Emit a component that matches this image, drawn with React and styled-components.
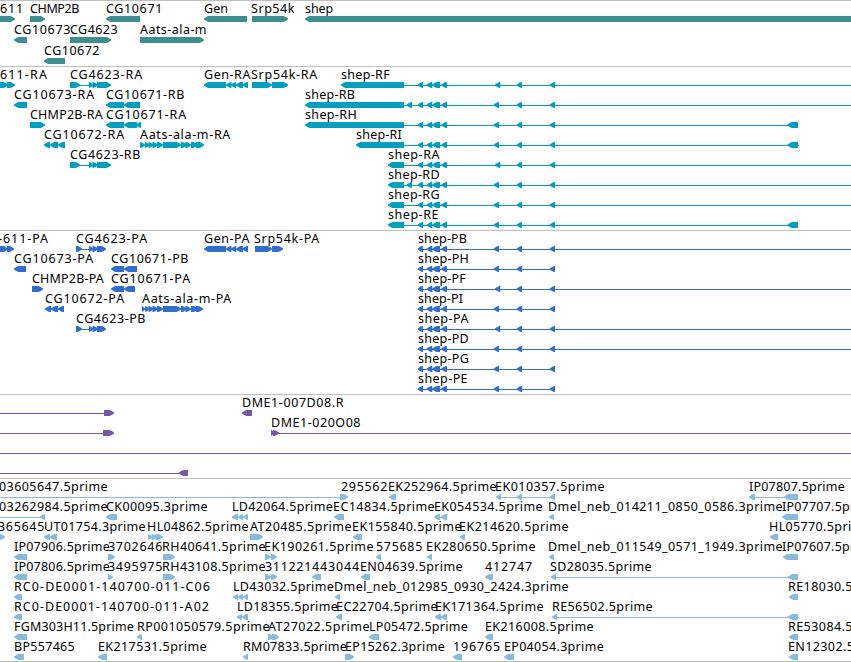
import React from "react";
import styled, { createGlobalStyle } from "styled-components";

const FONT = '12.5px "Noto Sans", "DejaVu Sans", sans-serif';
const VIEW = 851;

const ctx = document.createElement("canvas").getContext("2d");
ctx.font = FONT;

// spreads the letters of a label over the width it should take
const spacing = (text, width) =>
  (width - ctx.measureText(text).width) / text.length;

// name, label x, label end, strand, exons, intron line
const f = (name, x, end, dir, exons, line) => ({ name, x, end, dir, exons, line });

const codingExons = [[89, 93.5], [92.5, 98]];
const genExons = [[204, 226], [226, 231.5], [231, 236], [236, 243], [242.5, 248]];
const aatsExons = (a, b) => [
  [a, 145], [145, 149.5], [148.5, 153.5], [152.5, 158], [157, 163], [163, 181],
  [181, 187], [185.5, 191], [191, 198], [196, b],
];

const shepTail = (mid) => [
  [417.7, 423], [426.7, 432.3], [432.3, 440], [441.3, 447],
  [mid, mid + 5.3], [516.7, 522], [549.7, 555],
];

const shepR = (id, x, end, mid, opts = {}) =>
  f("shep-" + id, x, end, "L", [
    [x, 404],
    ...(opts.extra ? [[406.7, 412]] : []),
    ...shepTail(mid),
    ...(opts.last ? [[787.5, 798]] : []),
  ], [404, opts.last || VIEW]);

const shepP = (id, end, mid, stop) =>
  f("shep-" + id, 418, end, "L", shepTail(mid), [420, stop]);

const genes = [
  [
    f("611", 0, 24, "R", [[-20, 15]]),
    f("CHMP2B", 30, 79, "R", [[30, 45]]),
    f("CG10671", 106, 163, "L", [[106, 140]]),
    f("Gen", 204, 228, "L", [[204, 247]]),
    f("Srp54k", 251, 295, "R", [[252, 288]]),
    f("shep", 305, 333, "L", [[305, 870]]),
  ],
  [
    f("CG10673", 14, 71, "L", [[14, 27]]),
    f("CG4623", 70, 118, "R", [[70, 111]]),
    f("Aats-ala-m", 140, 207, "R", [[140, 204]]),
  ],
  [f("CG10672", 44, 100, "L", [[44, 65]])],
];

const transcripts = [
  [
    f("611-RA", 0, 48, "R", [[-6, 8], [7, 15]]),
    f("CG4623-RA", 70, 143, "R", [[70, 80], ...codingExons, [97, 111]], [79, 90]),
    f("Gen-RA", 204, 251, "L", genExons),
    f("Srp54k-RA", 251, 318, "R", [[252, 272], [272, 288]]),
    shepR("RF", 341, 390, 495),
  ],
  [
    f("CG10673-RA", 14, 95, "L", [[14, 27]]),
    f("CG10671-RB", 106, 185, "L", [[106, 124], [124, 140]]),
    shepR("RB", 305, 355, 493.7, { extra: true }),
  ],
  [
    f("CHMP2B-RA", 30, 103, "R", [[30, 45]]),
    f("CG10671-RA", 106, 187, "L", [[106, 124], [124, 137], [136, 141]]),
    shepR("RH", 305, 357, 493.7, { last: 798 }),
  ],
  [
    f("CG10672-RA", 44, 125, "L", [[44, 50], [50, 58], [58, 65]]),
    f("Aats-ala-m-RA", 140, 231, "R", aatsExons(140, 204)),
    shepR("RI", 356, 402, 493.7, { last: 799 }),
  ],
  [
    f("CG4623-RB", 70, 141, "R", [[70, 80], ...codingExons, [97, 111]], [79, 90]),
    shepR("RA", 388, 440, 495),
  ],
  [shepR("RD", 388, 440, 493.7, { extra: true })],
  [shepR("RG", 388, 440, 493.7)],
  [shepR("RE", 388, 439, 493.7, { last: 798 })],
];

const proteins = [
  [
    f("-611-PA", -2, 49, "R", [[-6, 8], [7, 14]]),
    f("CG4623-PA", 76, 148, "R", [[76, 82], ...codingExons, [97, 106]], [78, 90]),
    f("Gen-PA", 204, 250, "L", genExons),
    f("Srp54k-PA", 254, 320, "R", [[255, 272], [272, 283]]),
    shepP("PB", 467, 493.7, VIEW),
  ],
  [
    f("CG10673-PA", 14, 94, "L", [[14, 26]]),
    f("CG10671-PB", 111, 189, "L", [[111, 124], [124, 137]]),
    shepP("PH", 469, 493.7, 555),
  ],
  [
    f("CHMP2B-PA", 32, 104, "R", [[32, 43]]),
    f("CG10671-PA", 111, 191, "L", [[111, 124], [124, 135]]),
    shepP("PF", 466, 495, VIEW),
  ],
  [
    f("CG10672-PA", 45, 125, "L", [[45, 51], [51, 58], [58, 64]]),
    f("Aats-ala-m-PA", 142, 232, "R", aatsExons(142, 203)),
    shepP("PI", 463, 493.7, 555),
  ],
  [
    f("CG4623-PB", 76, 146, "R", [[76, 82], ...codingExons, [97, 106]], [78, 90]),
    shepP("PA", 469, 495, VIEW),
  ],
  [shepP("PD", 469, 493.7, VIEW)],
  [shepP("PG", 469, 493.7, 555)],
  [shepP("PE", 468, 493.7, 555)],
];

const insertions = [
  [
    f("", 0, 0, "R", [[104, 114]], [0, 104]),
    f("DME1-007D08.R", 242, 344, "L", [[242, 252]]),
  ],
  [
    f("", 0, 0, "R", [[103, 114]], [0, 103]),
    f("DME1-020O08", 271, 361, "R", [[271, 275], [273, 279]], [276, VIEW]),
  ],
  [f("", 0, 0, "R", [], [0, VIEW])],
  [f("", 0, 0, "L", [[179, 188]], [0, 181])],
];

const ests = [
  [
    f("03605647.5prime", -1, 108, "R", [[340, 348]], [0, 340]),
    f("295562", 341, 388, "L", []),
    f("EK252964.5prime", 388, 497, "L", [[389, 396]]),
    f("EK010357.5prime", 495, 605, "L", [[496, 501], [517, 522], [549.7, 555]], [498, 555]),
    f("IP07807.5prime", 749, 845, "L", [[749, 755], [784, 798]], [750, 790]),
  ],
  [
    f("03262984.5prime", -1, 108, "L", [[40, 45]], [0, 42]),
    f("CK00095.3prime", 106, 208, "L", [[106, 117]]),
    f("LD42064.5prime", 232, 333, "L", [[232, 238], [238, 243], [243, 248]]),
    f("EC14834.5prime", 333, 435, "L", [[334, 344]]),
    f("EK054534.5prime", 434, 543, "L", [[434, 440], [441, 447]], [436, 444]),
    f("Dmel_neb_014211_0850_0586.3prime", 548, 783, "L", [[549, 554]]),
    f("IP07707.5prime", 782, 878, "L", [[782, 798]]),
  ],
  [
    f("365645", -2, 45, "R", [[-2, 5]]),
    f("UT01754.3prime", 44, 146, "L", [[44, 50], [50, 57]]),
    f("HL04862.5prime", 147, 249, "R", [[148, 152.5], [151.5, 157], [155.5, 163]]),
    f("AT20485.5prime", 250, 352, "R", [[250, 263]]),
    f("EK155840.5prime", 352, 462, "L", [[353, 362]]),
    f("EK214620.5prime", 459, 569, "L", [[460, 465]]),
    f("HL05770.5prime", 769, 871, "L", [[770, 778]]),
  ],
  [
    f("IP07906.5prime", 14, 110, "L", [[14, 27]]),
    f("3702646", 108, 163, "R", [[108, 115]]),
    f("RH40641.5prime", 162, 266, "R", [[163, 175]]),
    f("EK190261.5prime", 264, 374, "R", [[265, 271], [271, 277]], [270, 273]),
    f("575685", 376, 423, "L", [[376, 381]]),
    f("EK280650.5prime", 426, 536, "L", [[427, 432]]),
    f("Dmel_neb_011549_0571_1949.3prime", 548, 783, "L", [[549, 554]]),
    f("IP07607.5prime", 782, 878, "L", [[783, 798]]),
  ],
  [
    f("IP07806.5prime", 14, 110, "L", [[14, 27]]),
    f("3495975", 108, 163, "R", [[108, 113]]),
    f("RH43108.5prime", 162, 266, "R", [[163, 175]]),
    f("311221", 265, 312, "R", [[265, 271], [271, 277]], [270, 273]),
    f("443044", 312, 360, "L", [[312, 321]]),
    f("EN04639.5prime", 360, 463, "L", [[361, 370]]),
    f("412747", 485, 533, "L", [[485, 493]]),
    f("SD28035.5prime", 550, 652, "L", [[551, 556], [788, 798]], [553, 790]),
  ],
  [
    f("RC0-DE0001-140700-011-C06", 14, 211, "L", [[14, 22]]),
    f("LD43032.5prime", 233, 334, "L", [[233, 238], [238, 243], [243, 248]]),
    f("Dmel_neb_012985_0930_2424.3prime", 334, 569, "L", [[335, 340]]),
    f("RE18030.5prime", 788, 890, "L", [[789, 798]]),
  ],
  [
    f("RC0-DE0001-140700-011-A02", 14, 210, "L", [[14, 22]]),
    f("LD18355.5prime", 237, 338, "L", [[237, 242], [242, 248]]),
    f("EC22704.5prime", 336, 438, "L", [[336, 342]]),
    f("EK171364.5prime", 435, 544, "L", [[435, 441], [441, 447]], [437, 444]),
    f("RE56502.5prime", 552, 653, "L", [[552, 557], [788, 798]], [553, 799]),
  ],
  [
    f("FGM303H11.5prime", 14, 134, "L", [[14, 27]]),
    f("RP001050579.5prime", 137, 270, "L", [[137, 142]]),
    f("AT27022.5prime", 268, 370, "R", [[268, 274], [272, 279]]),
    f("LP05472.5prime", 369, 468, "L", [[369, 379]]),
    f("EK216008.5prime", 485, 594, "L", [[485, 493]]),
    f("RE53084.5prime", 788, 890, "L", [[789, 798]]),
  ],
  [
    f("BP557465", 14, 75, "L", [[14, 24]]),
    f("EK217531.5prime", 98, 207, "L", [[98, 107]]),
    f("RM07833.5prime", 243, 347, "L", [[243, 248]]),
    f("EP15262.3prime", 345, 445, "R", [[345, 354]]),
    f("196765", 453, 501, "L", [[453, 462]]),
    f("EP04054.3prime", 504, 604, "L", [[504, 514]]),
    f("EN12302.5prime", 788, 891, "L", [[789, 798]]),
  ],
];

const tracks = [
  { id: "genes", color: "#3e8d93", rows: genes, labelHeight: 15, pad: "0 0 2px" },
  { id: "transcripts", color: "#009fbf", rows: transcripts },
  { id: "proteins", color: "#306dcd", rows: proteins },
  { id: "insertions", color: "#7458a6", rows: insertions },
  { id: "ests", color: "#87bbdc", rows: ests, pad: "1px 0" },
];

// block with a blunt, slightly rounded tip on the side of its strand
const exonPath = (dir, [a, b]) => {
  const left = dir === "L";
  const tip = left ? a : b;
  const back = left ? b : a;
  const at = (d) => (left ? tip + d : tip - d);
  const head = Math.min(4.5, b - a);
  return `M${tip} 2.5L${at(head * 0.6)} 0.8L${at(head)} 0H${back}V6H${at(head)}L${at(head * 0.6)} 5.2L${tip} 3.5Z`;
};

const Row = ({ features, color, labelHeight = 14 }) => (
  <Lane>
    <Labels $height={labelHeight}>
      {features.filter((x) => x.name).map((x) => (
        <Label
          key={x.name}
          style={{ left: x.x, letterSpacing: spacing(x.name, x.end - x.x) }}
        >
          {x.name}
        </Label>
      ))}
    </Labels>
    <Glyphs width={VIEW} height="6" fill={color}>
      {features.map((x, i) => (
        <g key={i}>
          {x.line && <rect x={x.line[0]} y="3" width={x.line[1] - x.line[0]} height="1" />}
          {x.exons.map((e) => <path key={e[0]} d={exonPath(x.dir, e)} />)}
        </g>
      ))}
    </Glyphs>
  </Lane>
);

const App = () => {
  return (
    <>
      <GlobalStyle />
      <Browser>
        {tracks.map((t) => (
          <Track key={t.id} $pad={t.pad}>
            {t.rows.map((row, i) => (
              <Row key={i} features={row} color={t.color} labelHeight={t.labelHeight} />
            ))}
          </Track>
        ))}
      </Browser>
    </>
  );
};

const GlobalStyle = createGlobalStyle`
  body {
    margin: 0;
    background: #fff;
    overflow: hidden;
  }
`;

const Browser = styled.main`
  width: ${VIEW}px;
  height: 662px;
  box-sizing: border-box;
  overflow: hidden;
  border-bottom: 1px solid #bfbfbf;
  font: ${FONT};
  color: #000;
`;

const Track = styled.section`
  border-top: 1px solid #bfbfbf;
  padding: ${(p) => p.$pad || "1px 0 2px"};
`;

const Lane = styled.div`
  display: flex;
  flex-direction: column;
`;

const Labels = styled.div`
  position: relative;
  height: ${(p) => p.$height}px;
`;

/* labels sit at their genomic position and may run into each other */
const Label = styled.span`
  position: absolute;
  bottom: 0;
  line-height: 14px;
  white-space: pre;
`;

const Glyphs = styled.svg`
  display: block;
`;

export default App;
